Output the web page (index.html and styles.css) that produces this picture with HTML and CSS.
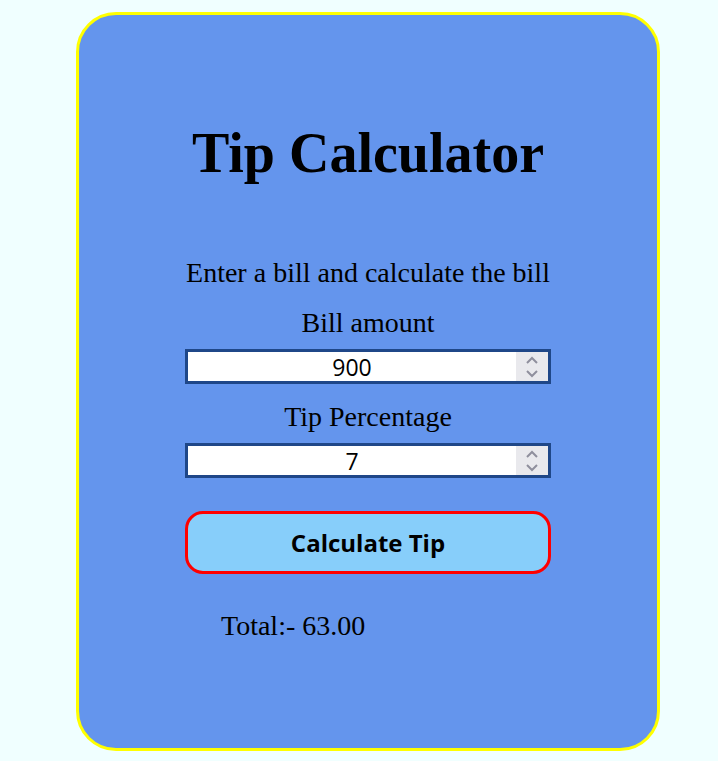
FILE: index.html
```html
<!DOCTYPE html>
<html lang="en">
<head>
<meta charset="utf-8">
<title>Tip Calculator</title>
<link rel="stylesheet" href="styles.css">
</head>
<body>
<div class="card">
  <h1 class="title">Tip Calculator</h1>
  <p class="intro">Enter a bill and calculate the bill</p>
  <label class="label">Bill amount</label>
  <div class="field">
    <input class="num" type="text" value="900">
    <span class="spin">
      <svg width="14" height="24" viewBox="0 0 14 24"><path d="M2 8 L7 3 L12 8 M2 16 L7 21 L12 16" fill="none" stroke="#8f8f9d" stroke-width="2"/></svg>
    </span>
  </div>
  <label class="label label-next">Tip Percentage</label>
  <div class="field">
    <input class="num" type="text" value="7">
    <span class="spin">
      <svg width="14" height="24" viewBox="0 0 14 24"><path d="M2 8 L7 3 L12 8 M2 16 L7 21 L12 16" fill="none" stroke="#8f8f9d" stroke-width="2"/></svg>
    </span>
  </div>
  <button class="calc">Calculate Tip</button>
  <p class="total">Total:- 63.00</p>
</div>
</body>
</html>
```
FILE: styles.css
```css
html, body {
  margin: 0;
  padding: 0;
}
body {
  background: #f0ffff;
  font-family: "Liberation Serif", "Times New Roman", serif;
  color: #000;
  padding: 12px 0 0 76px;
}
.card {
  box-sizing: border-box;
  width: 584px;
  height: 739px;
  background: #6495ed;
  border: 3px solid #ffff00;
  border-radius: 40px;
  display: flex;
  flex-direction: column;
  align-items: center;
  padding-top: 1px;
}
.title {
  font-size: 56px;
  font-weight: bold;
  margin: 105px 0 0;
  line-height: 64px;
}
.intro {
  font-size: 28px;
  margin: 72px 0 0;
  line-height: 32px;
}
.label {
  display: block;
  font-size: 28px;
  line-height: 32px;
  margin-top: 18px;
}
.label-next {
  margin-top: 17px;
}
.field {
  box-sizing: border-box;
  width: 366px;
  height: 35px;
  margin-top: 10px;
  border: 3px solid #1f4788;
  background: #fff;
  display: flex;
}
.num {
  flex: 1;
  min-width: 0;
  border: none;
  outline: none;
  padding: 0;
  margin: 0;
  font-family: "Open Sans", "Liberation Sans", sans-serif;
  font-size: 23px;
  text-align: center;
  color: #000;
  background: transparent;
}
.spin {
  width: 32px;
  background: #e9e9ed;
  display: flex;
  align-items: center;
  justify-content: center;
}
.calc {
  box-sizing: border-box;
  width: 366px;
  height: 63px;
  margin-top: 33px;
  border: 3px solid #ff0000;
  border-radius: 18px;
  background: #87cefa;
  font-family: "Open Sans", "Liberation Sans", sans-serif;
  font-weight: bold;
  font-size: 24px;
  color: #000;
}
.total {
  align-self: flex-start;
  margin: 36px 0 0 142px;
  font-size: 28px;
  line-height: 32px;
}
```
